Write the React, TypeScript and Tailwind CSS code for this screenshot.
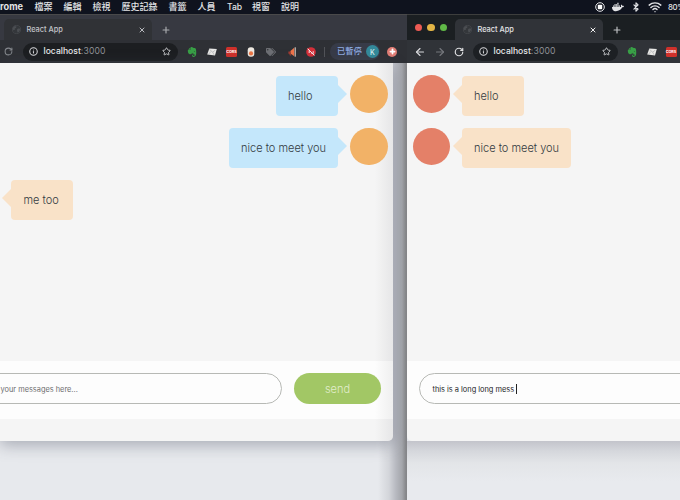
import type { ReactNode } from "react";
import { ArrowLeft, ArrowRight, Bluetooth, Info, Plus, RotateCw, Star, Wifi, X } from "lucide-react";
import { SiEvernote } from "react-icons/si";
import { FaDocker, FaTags } from "react-icons/fa";

const menus = [
  { label: "檔案", box: "ml-[11.5px] w-[18px]" },
  { label: "編輯", box: "ml-[11px] w-[18px]" },
  { label: "檢視", box: "ml-[11px] w-[18px]" },
  { label: "歷史記錄", box: "ml-[11px] w-[36px]" },
  { label: "書籤", box: "ml-[11px] w-[18px]" },
  { label: "人員", box: "ml-[11px] w-[18px]" },
  { label: "Tab", box: "ml-[11.5px] w-[14px] text-[8.6px]" },
  { label: "視窗", box: "ml-[11px] w-[18px]" },
  { label: "說明", box: "ml-[11px] w-[18px]" },
];

function MenuBar() {
  return (
    <header className="flex h-[14px] shrink-0 items-center overflow-hidden whitespace-nowrap bg-[#0f131e] text-[9px] font-medium leading-[14px] text-[#e2e3e6]">
      <span className="-ml-[13px] w-[36px] shrink-0 text-right text-[9.2px] font-bold">Chrome</span>
      {menus.map((m) => (
        <span key={m.label} className={"shrink-0 " + m.box}>{m.label}</span>
      ))}
      <div className="ml-[296px] flex shrink-0 items-center">
        <svg viewBox="0 0 10 10" className="h-[10px] w-[10px]">
          <circle cx="5" cy="5" r="4.3" fill="none" stroke="#e8e8ea" strokeWidth="1" />
          <rect x="2.8" y="2.8" width="4.4" height="4.4" rx=".8" fill="#fff" />
        </svg>
        <FaDocker className="ml-[7px] h-[12px] w-[12px]" />
        <Bluetooth className="ml-[7px] h-[10px] w-[10px]" strokeWidth={2.8} />
        <Wifi className="ml-[7px] h-[14px] w-[14px]" strokeWidth={2.4} />
        <span className="ml-[6px] text-[7.8px] tracking-[-0.3px]">80%</span>
      </div>
    </header>
  );
}

function Tab({ active }: { active?: boolean }) {
  return (
    <div className={"flex h-[21px] w-[148px] shrink-0 items-center rounded-t-[5px] " + (active ? "bg-[#303338]" : "bg-[#303236]")}>
      <svg viewBox="0 0 9 9" className="ml-[8px] h-[9px] w-[9px] shrink-0">
        <circle cx="4.5" cy="4.5" r="4.1" fill="#34373b" stroke="#494c50" strokeWidth=".7" />
        <path d="M1 2.5 2.6 1l2 .5L4 3 2.7 3.4 3 4.6 1.7 5.3.6 4.4ZM5.2 4l2-.8 1 1.4L7 7 5.6 7.6 5 5.8Z" fill="#4b4e52" />
      </svg>
      <span className={"ml-[5.5px] w-[60px] text-[7.4px] font-medium " + (active ? "text-[#e3e4e6]" : "text-[#c2c4c8]")}>React App</span>
      <X className={"ml-[51.5px] h-[8px] w-[8px] shrink-0 " + (active ? "text-[#eeeeee]" : "text-[#b9bbbf]")} strokeWidth={3} />
    </div>
  );
}

function AddressBar({ active }: { active?: boolean }) {
  return (
    <div className={"flex h-[18px] shrink-0 items-center rounded-full " + (active ? "w-[145px] bg-[#1d2024]" : "w-[155px] bg-[#1c1e21]")}>
      <Info className="ml-[6px] h-[9px] w-[9px] shrink-0 text-[#d5d6d9]" strokeWidth={2.8} />
      <span className="ml-[5.5px] w-[70px] shrink-0 text-[8.6px] font-medium text-[#e6e7e9]">
        localhost<span className="font-normal tracking-[0.12px] text-[#8e9196]">:3000</span>
      </span>
      <Star className={"h-[9px] w-[9px] shrink-0 text-[#c9cacd] " + (active ? "ml-[38.5px]" : "ml-[48.5px]")} strokeWidth={2.5} />
    </div>
  );
}

function Extensions() {
  return (
    <>
      <SiEvernote className="h-[10px] w-[10px] shrink-0 text-[#38a046]" />
      <svg viewBox="0 0 10 8" className="ml-[10px] h-[8px] w-[10px] shrink-0">
        <path d="M2.3.4 9.8 1 8 7.4.2 6.6Z" fill="#e9e9e7" />
        <path d="m2.5 1.5 3.2 2.6 2.7-2M1.5 6.2l2.7-2.9M7 6.8 5.8 4.2" fill="none" stroke="#a4a6a9" strokeWidth=".6" />
      </svg>
      <span className="ml-[9px] flex h-[10px] w-[11px] shrink-0 items-center justify-center rounded-[1.5px] bg-[#cf312b] text-[3.8px] font-bold leading-none text-white">CORS</span>
    </>
  );
}

function Avatar({ color }: { color: string }) {
  return <div className={"-mt-[0.5px] h-[37.5px] w-[37.5px] shrink-0 rounded-full " + color} />;
}

function Bubble({ mine, size, children }: { mine?: boolean; size: string; children: ReactNode }) {
  return (
    <div className={"flex items-start " + (mine ? "mr-[3px]" : "ml-[3px] flex-row-reverse")}>
      <div className={"flex h-[40px] items-center rounded-[4px] pt-[1px] pl-[12px] text-[11px] font-light text-[#333b42] " + size + (mine ? " bg-[#c4e7fb]" : " bg-[#f9e2c8]")}>
        {children}
      </div>
      <svg viewBox="0 0 9 18" className={"mt-[9px] h-[18px] w-[9px] " + (mine ? "" : "-scale-x-100")}>
        <path d="M0 0 9 9 0 18Z" fill={mine ? "#c4e7fb" : "#f9e2c8"} />
      </svg>
    </div>
  );
}

function LeftWindow() {
  return (
    <section className="flex w-[407px] shrink-0 flex-col bg-[linear-gradient(to_right,transparent_378px,#d3d5da_389px,#b7b9c0_396px,#a4a6ab_402px,#858689_406px)]">
      <div className="flex h-[26px] shrink-0 items-end border-t border-[#49494a] bg-[#373941] pl-[4px]">
        <Tab />
        <Plus className="mb-[5.5px] ml-[8.5px] h-[10px] w-[10px] text-[#a9abaf]" strokeWidth={2.8} />
      </div>
      <div className="flex h-[23px] shrink-0 items-center bg-[#2e3035]">
        <RotateCw className="ml-[4px] mr-[10px] h-[9px] w-[9px] text-[#85888d]" strokeWidth={2.8} />
        <AddressBar />
        <div className="ml-[9px] flex items-center">
          <Extensions />
          <svg viewBox="0 0 8 10" className="ml-[10px] h-[10px] w-[8px]">
            <rect x=".7" y=".2" width="6.6" height="9.6" rx="3" fill="#eee9e2" />
            <circle cx="4" cy="6.4" r="2.1" fill="#ec7544" />
          </svg>
          <FaTags className="ml-[11px] h-[10px] w-[10px] text-[#6d6f74]" />
          <svg viewBox="0 0 8 10" className="ml-[12px] h-[10px] w-[8px]">
            <path d="M6.2.8v8.4L2.4 6.4V4Z" fill="#ee7349" />
            <path d="M7.2.3v9.4" stroke="#e8ddd5" strokeWidth="1" />
            <path d="M.4 4.6h2v2l.9 2H1.9L1.2 6.8H.4Z" fill="#a23b31" />
          </svg>
          <svg viewBox="0 0 10 10" className="ml-[10px] h-[10px] w-[10px]">
            <circle cx="5" cy="5" r="4.8" fill="#d5303a" />
            <path d="M1.7 1.7 8.4 8.4M3.2 6V3.3L5 5M5.5 6.5h1.7V4.2" stroke="#f3e6e7" strokeWidth="1" fill="none" />
          </svg>
        </div>
        <div className="ml-[8px] h-[10px] w-px bg-[#515358]" />
        <div className="ml-[5px] flex h-[17px] w-[50px] items-center rounded-full bg-[#373b48] pl-[7px] text-[8.3px] font-medium text-[#8da9e0]">
          <span className="w-[26px] whitespace-nowrap">已暫停</span>
          <span className="ml-[3px] flex h-[13px] w-[13px] shrink-0 items-center justify-center rounded-full bg-[#33899a] pt-px text-[7px] leading-none text-[#d9eef0]">K</span>
        </div>
        <div className="ml-[7px] flex h-[10px] w-[10px] items-center justify-center rounded-full bg-[#e07d75]">
          <Plus className="h-[7px] w-[7px] text-white" strokeWidth={6} />
        </div>
      </div>
      <div className="flex h-[378px] w-[393px] flex-col rounded-br-[5px] bg-[linear-gradient(to_right,#f5f5f5_375px,#e6e6e7_393px)] shadow-[0_4px_16px_rgba(70,74,95,0.4)]">
        <div className="flex h-[298px] flex-col">
          <div className="mt-[12.5px] flex h-[40px] justify-end pr-[5.5px]">
            <Bubble mine size="w-[62px]">hello</Bubble>
            <Avatar color="bg-[#f2b267]" />
          </div>
          <div className="mt-[12.5px] flex h-[40px] justify-end pr-[5.5px]">
            <Bubble mine size="w-[109px]">nice to meet you</Bubble>
            <Avatar color="bg-[#f2b267]" />
          </div>
          <div className="mt-[12px] -ml-[1px] flex h-[40px]">
            <Bubble size="w-[62px]"><span className="pl-[0.5px]">me too</span></Bubble>
          </div>
        </div>
        <div className="flex h-[58px] items-start bg-[linear-gradient(to_right,#fdfdfd_375px,#efefef_393px)] pt-[12px]">
          <div className="-ml-[20px] flex h-[31px] w-[302px] items-center rounded-full border border-[#b7b9b5] pt-[2px] pl-[19.5px] text-[7.4px] text-[#6e6e70]">your messages here...</div>
          <button className="ml-[12px] h-[31px] w-[87px] rounded-full bg-[#a2c765] pt-[2px] text-[11px] font-light text-[#e1edcb]">send</button>
        </div>
      </div>
    </section>
  );
}

function RightWindow() {
  return (
    <section className="flex w-[273px] shrink-0 flex-col overflow-hidden">
      <div className="flex h-[26px] shrink-0 items-end border-t border-[#3d3e3d] bg-[#1b1f22]">
        <div className="mb-[9px] ml-[7.5px] flex gap-[5px]">
          <i className="h-[7.5px] w-[7.5px] rounded-full bg-[#ed5b54]" />
          <i className="h-[7.5px] w-[7.5px] rounded-full bg-[#e3b545]" />
          <i className="h-[7.5px] w-[7.5px] rounded-full bg-[#60b947]" />
        </div>
        <div className="ml-[8px]"><Tab active /></div>
        <Plus className="mb-[5.5px] ml-[8.5px] h-[10px] w-[10px] text-[#c0c2c4]" strokeWidth={2.8} />
      </div>
      <div className="flex h-[23px] shrink-0 items-center bg-[#303338]">
        <ArrowLeft className="ml-[7px] h-[12px] w-[12px] shrink-0 text-[#d8d9dc]" strokeWidth={2.3} />
        <ArrowRight className="ml-[7.5px] h-[12px] w-[12px] shrink-0 text-[#75787d]" strokeWidth={2.3} />
        <RotateCw className="ml-[8.5px] mr-[9px] h-[10px] w-[10px] shrink-0 text-[#dedfe1]" strokeWidth={2.8} />
        <AddressBar active />
        <div className="ml-[8.5px] flex items-center"><Extensions /></div>
      </div>
      <div className="flex h-[378px] w-[300px] shrink-0 flex-col overflow-hidden rounded-bl-[5px] bg-[#f5f5f5]">
        <div className="flex h-[298px] flex-col pl-[5.5px]">
          <div className="mt-[12.5px] flex h-[40px]">
            <Avatar color="bg-[#e48068]" />
            <Bubble size="w-[62px]">hello</Bubble>
          </div>
          <div className="mt-[12.5px] flex h-[40px]">
            <Avatar color="bg-[#e48068]" />
            <Bubble size="w-[109px]">nice to meet you</Bubble>
          </div>
        </div>
        <div className="h-[58px] bg-[#fdfdfd] pt-[12px] pl-[12px]">
          <div className="flex h-[31px] w-[310px] items-center rounded-full border border-[#b7b9b5] pt-[2px] pl-[12.5px] text-[7.4px] text-[#242427]">
            this is a long long mess<span className="-mt-px ml-[2px] h-[10px] w-px bg-[#222]" />
          </div>
        </div>
      </div>
      <div className="h-[59px] bg-[linear-gradient(to_bottom,#c3c4cb_0,#d5d7dc_10px,#e3e5e8_22px,#e8eaee_40px)]" />
    </section>
  );
}

export default function App() {
  return (
    <main className="flex h-[500px] w-[680px] flex-col overflow-hidden bg-[#e7e9ed] font-['Inter','Noto_Sans_CJK_TC',sans-serif]">
      <MenuBar />
      <div className="flex h-[486px] whitespace-nowrap bg-[#e7e9ed]">
        <LeftWindow />
        <RightWindow />
      </div>
    </main>
  );
}
